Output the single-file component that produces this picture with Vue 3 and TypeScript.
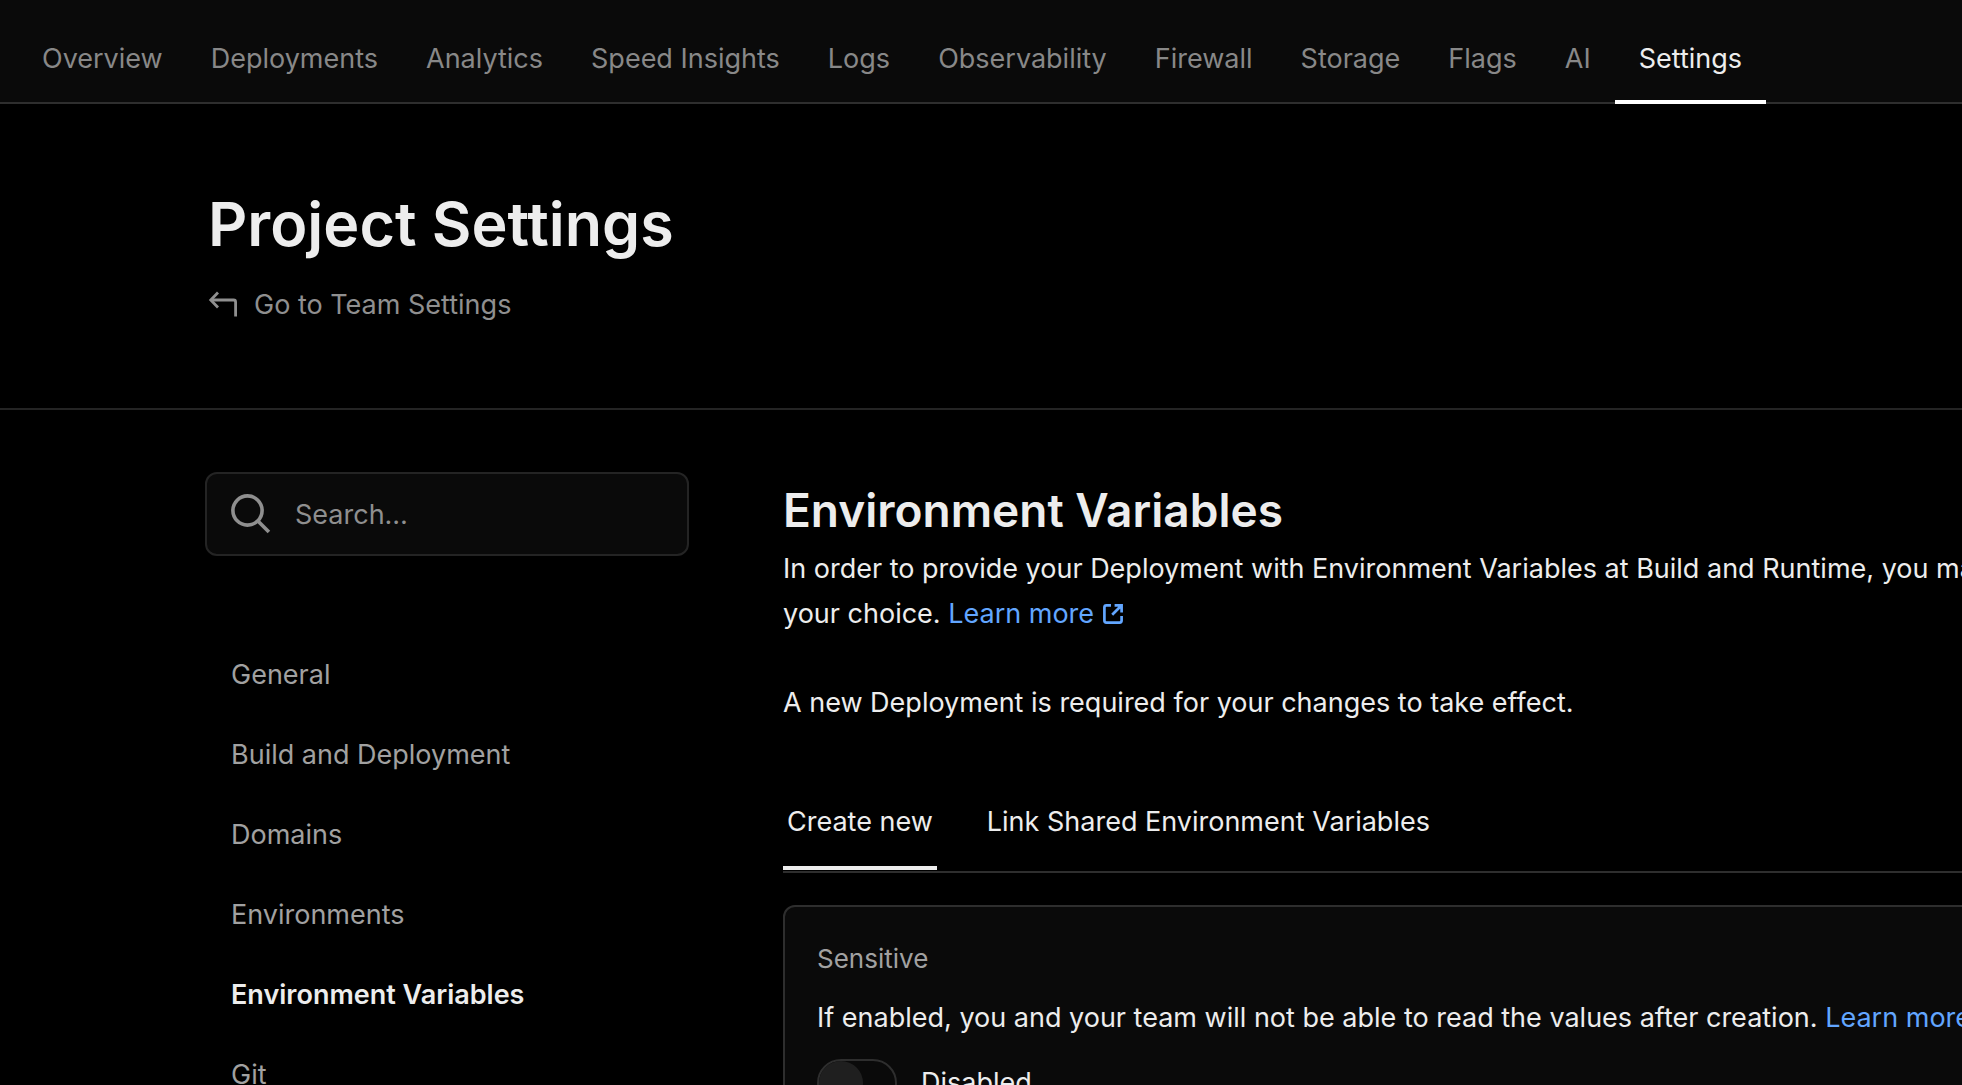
<script setup lang="ts">
import { ref } from 'vue'

const projectTabs = [
  'Overview',
  'Deployments',
  'Analytics',
  'Speed Insights',
  'Logs',
  'Observability',
  'Firewall',
  'Storage',
  'Flags',
  'AI',
  'Settings',
]
const activeProjectTab = 'Settings'

const sections = [
  'General',
  'Build and Deployment',
  'Domains',
  'Environments',
  'Environment Variables',
  'Git',
]
const activeSection = 'Environment Variables'

const formTabs = ['Create new', 'Link Shared Environment Variables']
const activeFormTab = ref('Create new')

const query = ref('')
const sensitive = ref(false)
</script>

<template>
  <div class="page">
    <header class="topbar">
      <nav class="tabs" aria-label="Project">
        <a
          v-for="tab in projectTabs"
          :key="tab"
          href="#"
          class="tab"
          :class="{ active: tab === activeProjectTab }"
          >{{ tab }}</a
        >
      </nav>
    </header>

    <section class="hero">
      <h1>Project Settings</h1>
      <a href="#" class="team-link">
        <svg width="30" height="28" viewBox="0 0 30 28" fill="none" stroke="currentColor" stroke-width="2.8" aria-hidden="true">
          <path d="M10 1.6 L2.8 9 L10 16.4" />
          <path d="M2.8 9 H25.6 Q27.6 9 27.6 11 V25.6" />
        </svg>
        <span>Go to Team Settings</span>
      </a>
    </section>

    <div class="body">
      <aside class="sidebar">
        <label class="search">
          <svg width="40" height="40" viewBox="0 0 40 40" fill="none" stroke="currentColor" stroke-width="3.6" aria-hidden="true">
            <circle cx="16.5" cy="16.5" r="14.6" />
            <path d="M26.9 26.9 L37.9 37.9" />
          </svg>
          <input v-model="query" type="search" placeholder="Search…" aria-label="Search settings" />
        </label>
        <nav class="sections" aria-label="Settings">
          <a
            v-for="section in sections"
            :key="section"
            href="#"
            class="section"
            :class="{ active: section === activeSection }"
            >{{ section }}</a
          >
        </nav>
      </aside>

      <main class="content">
        <h2>Environment Variables</h2>
        <p>
          In order to provide your Deployment with Environment Variables at Build and Runtime, you may
          enter them right here, for the Environment of<br />your choice.
          <a href="#" class="link">Learn more
            <svg class="external" width="22" height="22" viewBox="0 0 22 22" fill="none" stroke="currentColor" stroke-width="2.7" aria-hidden="true">
              <path d="M9 2.4 H4.4 Q2.4 2.4 2.4 4.4 V17.6 Q2.4 19.6 4.4 19.6 H17.6 Q19.6 19.6 19.6 17.6 V13" />
              <path d="M12.6 2.4 H19.6 V9.4 M19.2 2.8 L10.2 11.8" />
            </svg>
          </a>
        </p>
        <p class="notice">A new Deployment is required for your changes to take effect.</p>

        <div class="form-tabs" role="tablist">
          <button
            v-for="tab in formTabs"
            :key="tab"
            type="button"
            role="tab"
            class="form-tab"
            :class="{ active: tab === activeFormTab }"
            :aria-selected="tab === activeFormTab"
            @click="activeFormTab = tab"
          >
            {{ tab }}
          </button>
        </div>

        <section class="card">
          <h3>Sensitive</h3>
          <p class="hint">
            If enabled, you and your team will not be able to read the values after creation.
            <a href="#" class="link">Learn more</a>
          </p>
          <label class="switch">
            <input v-model="sensitive" type="checkbox" />
            <span>{{ sensitive ? 'Enabled' : 'Disabled' }}</span>
          </label>
        </section>
      </main>
    </div>
  </div>
</template>

<style>
body {
  margin: 0;
  background: #000;
}
</style>

<style scoped>
.page {
  height: 100vh;
  overflow: hidden;
  background: #000;
  color: #ededed;
  font-family: Inter, 'Liberation Sans', sans-serif;
  font-size: 27px;
  line-height: 42px;
}
h1,
h2,
h3,
p {
  margin: 0;
}
a {
  color: inherit;
  text-decoration: none;
}

.topbar {
  padding: 14px 18px 0;
  background: #0a0a0a;
  border-bottom: 2px solid #2e2e2e;
}
.tabs {
  display: flex;
}
.tab {
  position: relative;
  padding: 24px 24px 22px;
  color: #888;
  white-space: nowrap;
}
.tab.active {
  color: #ededed;
}
.tab.active::after {
  content: '';
  position: absolute;
  left: 0;
  right: 0;
  bottom: -2px;
  height: 4px;
  background: #fff;
}

.hero {
  padding: 84px 208px 82px;
  border-bottom: 2px solid #242424;
}
h1 {
  font-size: 61px;
  line-height: 72px;
  font-weight: 600;
}
.team-link {
  display: flex;
  align-items: center;
  gap: 16px;
  width: fit-content;
  margin-top: 24px;
  color: #8f8f8f;
}

.body {
  display: flex;
  align-items: flex-start;
  gap: 94px;
  padding: 62px 0 0 205px;
}
.sidebar {
  flex: 0 0 484px;
  min-width: 0;
}
.search {
  display: flex;
  align-items: center;
  gap: 24px;
  box-sizing: border-box;
  height: 84px;
  padding: 0 24px;
  background: #0a0a0a;
  border: 2px solid #242424;
  border-radius: 12px;
  color: #8f8f8f;
}
.search svg {
  flex: none;
}
.search input {
  flex: 1;
  min-width: 0;
  padding: 2px 0 0;
  border: 0;
  outline: 0;
  background: none;
  color: #ededed;
  font: inherit;
}
.search input::placeholder {
  color: #8f8f8f;
  opacity: 1;
}
.sections {
  display: flex;
  flex-direction: column;
  margin-top: 78px;
}
.section {
  padding: 20px 26px 18px;
  color: #a1a1a1;
}
.section.active {
  color: #ededed;
  font-weight: 600;
}

.content {
  flex: 1 0 1840px;
  padding-top: 8px;
}
h2 {
  margin-bottom: 6px;
  font-size: 46px;
  line-height: 60px;
  font-weight: 600;
}
.content > p {
  line-height: 45px;
}
.content > .notice {
  margin-top: 44px;
}
.link {
  color: #62a6ff;
}
.external {
  vertical-align: -2px;
}
.form-tabs {
  display: flex;
  gap: 46px;
  margin-top: 46px;
  border-bottom: 2px solid #2e2e2e;
}
.form-tab {
  position: relative;
  padding: 30px 4px 28px;
  border: 0;
  background: none;
  color: #ededed;
  font: inherit;
}
.form-tab.active::after {
  content: '';
  position: absolute;
  left: 0;
  right: 0;
  bottom: 1px;
  height: 4px;
  background: #ededed;
}

.card {
  margin-top: 32px;
  padding: 32px;
  background: #0a0a0a;
  border: 2px solid #2e2e2e;
  border-radius: 12px;
}
h3 {
  color: #a1a1a1;
  font-size: 26px;
  line-height: 40px;
  font-weight: 400;
}
.hint {
  margin-top: 18px;
}
.switch {
  display: flex;
  align-items: center;
  gap: 24px;
  width: fit-content;
  margin-top: 20px;
}
.switch input {
  appearance: none;
  box-sizing: border-box;
  width: 80px;
  height: 48px;
  margin: 0;
  border: 2px solid #2e2e2e;
  border-radius: 24px;
  background: #0a0a0a;
}
.switch input::before {
  content: '';
  display: block;
  width: 44px;
  height: 44px;
  border-radius: 50%;
  background: #1f1f1f;
}
.switch input:checked::before {
  margin-left: auto;
  background: #ededed;
}
</style>
